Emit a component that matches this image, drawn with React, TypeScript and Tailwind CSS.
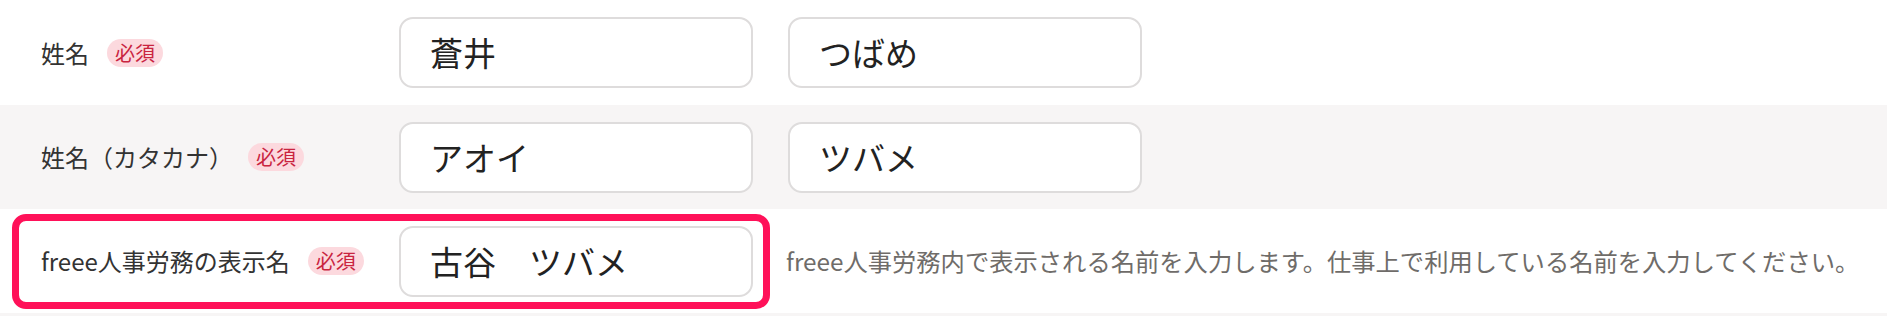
const font = { fontFamily: '"Noto Sans CJK JP", "Noto Sans", sans-serif' };

function Badge() {
  return (
    <span className="inline-flex h-[28px] items-center rounded-full bg-[#fcd9de] px-[8px] text-[20px] leading-none text-[#c9243f]">
      必須
    </span>
  );
}

function Label({ text }: { text: string }) {
  return (
    <div className="flex items-center gap-[18px]">
      <span className="text-[24px] leading-none text-[#333333]">{text}</span>
      <Badge />
    </div>
  );
}

function Field({ value }: { value: string }) {
  return (
    <div className="flex h-[71px] w-[354px] shrink-0 items-center rounded-[14px] border-2 border-[#dedcdc] bg-white px-[29px] text-[33px] leading-none text-[#222222]">
      {value}
    </div>
  );
}

export default function App() {
  return (
    <div className="h-[316px] w-[1887px] bg-[#f7f5f5]" style={font}>
      <div className="flex h-[105px] items-center bg-white">
        <div className="w-[399px] shrink-0 pl-[41px]">
          <Label text="姓名" />
        </div>
        <div className="flex gap-[35px]">
          <Field value="蒼井" />
          <Field value="つばめ" />
        </div>
      </div>

      <div className="flex h-[104px] items-center">
        <div className="w-[399px] shrink-0 pl-[41px]">
          <div className="flex items-center gap-[15px]">
            <span className="text-[24px] leading-none text-[#333333]">姓名（カタカナ）</span>
            <Badge />
          </div>
        </div>
        <div className="flex gap-[35px]">
          <Field value="アオイ" />
          <Field value="ツバメ" />
        </div>
      </div>

      <div className="flex h-[104px] items-center bg-white">
        <div className="ml-[12px] flex h-[95px] items-center rounded-[14px] border-[7px] border-[#ff1159] pr-[10px]">
          <div className="w-[380px] shrink-0 pl-[22px]">
            <Label text="freee人事労務の表示名" />
          </div>
          <Field value="古谷　ツバメ" />
        </div>
        <p className="ml-[16px] text-[24.3px] leading-none text-[#6f6c69]">
          freee人事労務内で表示される名前を入力します。仕事上で利用している名前を入力してください。
        </p>
      </div>
    </div>
  );
}
